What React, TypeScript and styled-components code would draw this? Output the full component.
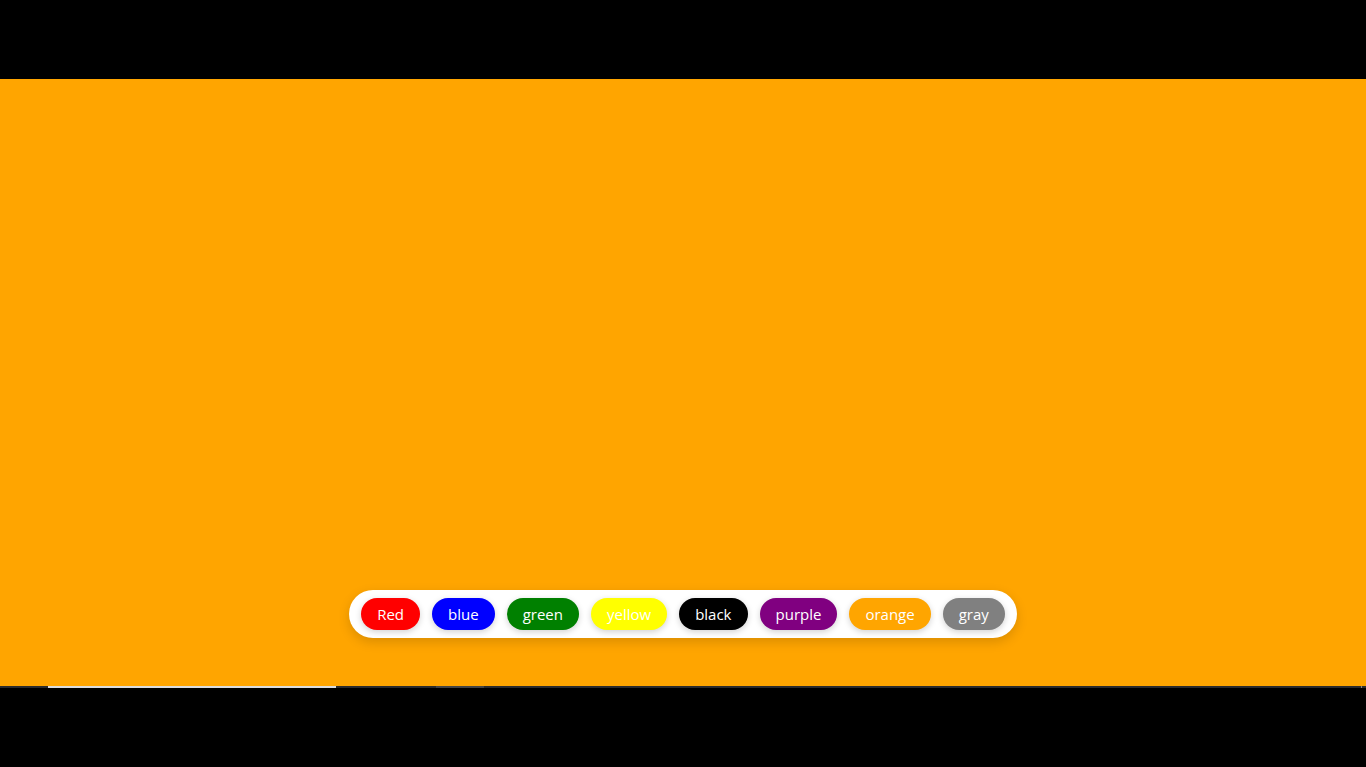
import styled, { createGlobalStyle } from "styled-components"

const GlobalStyle = createGlobalStyle`
    html, body {
        margin: 0;
        padding: 0;
        background: #000;
        font-family: "Segoe UI", "Open Sans", "Noto Sans", sans-serif;
    }
`

const Screen = styled.div`
    height: 767px;
    display: flex;
    flex-direction: column;
    padding-top: 79px;
    box-sizing: border-box;
`

const Stage = styled.main<{ $bg: string }>`
    height: 607px;
    background-color: ${(p) => p.$bg};
    display: flex;
    align-items: flex-end;
    justify-content: center;
    padding-bottom: 48px;
    box-sizing: border-box;
`

const Palette = styled.div`
    display: flex;
    gap: 12px;
    padding: 8px 12px;
    background: #fff;
    border-radius: 24px;
    box-shadow: 0 4px 12px rgba(0, 0, 0, 0.15);
`

const Swatch = styled.button<{ $color: string }>`
    height: 32px;
    padding: 0 16px;
    border: none;
    border-radius: 16px;
    background-color: ${(p) => p.$color};
    color: #fff;
    font-family: inherit;
    font-size: 15px;
    box-shadow: 0 2px 6px rgba(0, 0, 0, 0.18);
    cursor: pointer;
`

const Track = styled.div`
    position: relative;
    height: 2px;
    background: #2b2b2b;
`

const Played = styled.div`
    position: absolute;
    left: 48px;
    top: 0;
    width: 288px;
    height: 2px;
    background: #dcdcdc;
`

const Buffered = styled.div`
    position: absolute;
    left: 436px;
    top: 0;
    width: 48px;
    height: 2px;
    background: #444;
`

const Tick = styled.div`
    position: absolute;
    right: 4px;
    top: 0;
    width: 1px;
    height: 2px;
    background: #888;
`

const colors = [
    { label: "Red", value: "red" },
    { label: "blue", value: "blue" },
    { label: "green", value: "green" },
    { label: "yellow", value: "yellow" },
    { label: "black", value: "black" },
    { label: "purple", value: "purple" },
    { label: "orange", value: "orange" },
    { label: "gray", value: "gray" },
]

export default function App() {
    return (
        <>
            <GlobalStyle />
            <Screen>
                <Stage $bg="orange">
                    <Palette>
                        {colors.map((c) => (
                            <Swatch key={c.value} $color={c.value}>
                                {c.label}
                            </Swatch>
                        ))}
                    </Palette>
                </Stage>
                <Track>
                    <Played />
                    <Buffered />
                    <Tick />
                </Track>
            </Screen>
        </>
    )
}
